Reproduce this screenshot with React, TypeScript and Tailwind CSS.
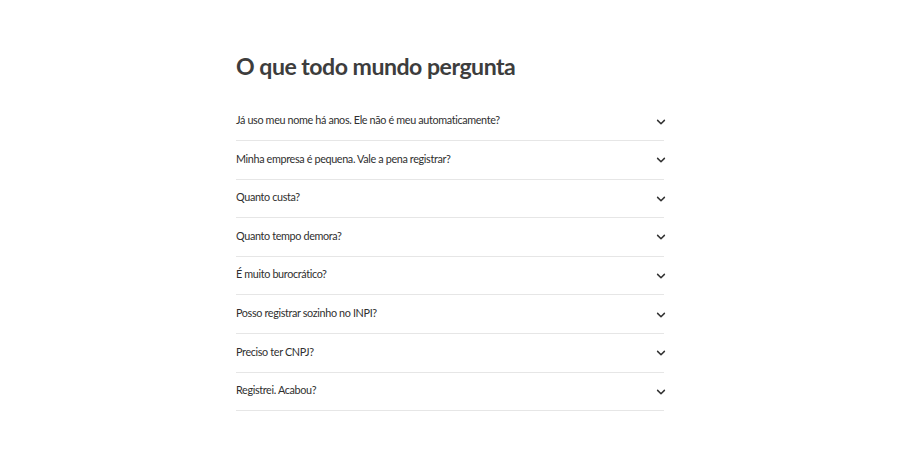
import React from "react";

const questions = [
  "Já uso meu nome há anos. Ele não é meu automaticamente?",
  "Minha empresa é pequena. Vale a pena registrar?",
  "Quanto custa?",
  "Quanto tempo demora?",
  "É muito burocrático?",
  "Posso registrar sozinho no INPI?",
  "Preciso ter CNPJ?",
  "Registrei. Acabou?",
];

function Chevron() {
  return (
    <svg width="10" height="10" viewBox="0 0 10 10" fill="none" className="shrink-0">
      <path d="M1.6 3.4 L5 6.8 L8.4 3.4" stroke="#333" strokeWidth="1.5" strokeLinecap="round" strokeLinejoin="round" />
    </svg>
  );
}

export default function App() {
  return (
    <div className="min-h-[468px] w-full bg-white" style={{ fontFamily: "Lato, 'Noto Sans', sans-serif" }}>
      <div className="mx-auto w-[428px] pt-[51px]">
        <h2 className="text-[23.1px] font-bold leading-[30px] text-[#3d3d3d] tracking-[-0.5px]">
          O que todo mundo pergunta
        </h2>
        <div className="mt-[21.4px]">
          {questions.map((q) => (
            <div key={q} className="flex h-[38.6px] items-center justify-between border-b border-[#e6e6e6]">
              <span className="text-[10.8px] text-[#2f2f2f] tracking-[-0.35px] pb-[2px]">{q}</span>
              <span className="mr-[-2px] mt-[1px]"><Chevron /></span>
            </div>
          ))}
        </div>
      </div>
    </div>
  );
}
